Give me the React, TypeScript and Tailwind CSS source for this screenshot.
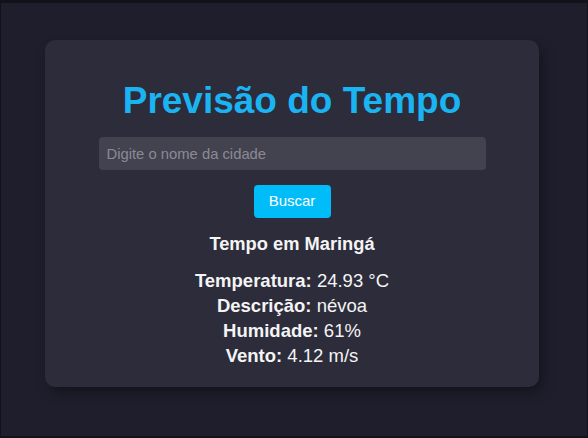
export default function App() {
	return (
		<div
			className="min-h-screen bg-[#1f1e2c] border-t-[3px] border-b-[2px] border-x border-[#11121a] pt-[37px] pl-[44px]"
			style={{ fontFamily: '"Liberation Sans", Arial, sans-serif' }}
		>
			{/* Card */}
			<div className="w-[494px] rounded-[10px] bg-[#2d2c3b] pt-[40px] pb-[19px] shadow-[4px_6px_12px_rgba(0,0,0,0.35)] text-center">
				<h1 className="text-[37px] leading-[41px] font-bold text-[#1ab4f2]">
					Previsão do Tempo
				</h1>

				<input
					type="text"
					placeholder="Digite o nome da cidade"
					className="mt-[16px] block mx-auto w-[387px] h-[33px] rounded-[4px] bg-[#43424f] px-[8px] text-[14.8px] text-white placeholder:text-[#8b8a96] outline-none"
				/>

				<button className="mt-[15px] w-[77px] h-[33px] rounded-[4px] bg-[#00bdfa] text-[15px] text-white">
					Buscar
				</button>

				{/* Result */}
				<div className="mt-[13px] text-[#f4f4f4]">
					<h3 className="text-[18.3px] leading-[25px] font-bold">
						Tempo em Maringá
					</h3>
					<div className="mt-[12px] text-[18.5px] leading-[25px]">
						<p>
							<span className="font-bold">Temperatura:</span> 24.93 °C
						</p>
						<p>
							<span className="font-bold">Descrição:</span> névoa
						</p>
						<p>
							<span className="font-bold">Humidade:</span> 61%
						</p>
						<p>
							<span className="font-bold">Vento:</span> 4.12 m/s
						</p>
					</div>
				</div>
			</div>
		</div>
	);
}
